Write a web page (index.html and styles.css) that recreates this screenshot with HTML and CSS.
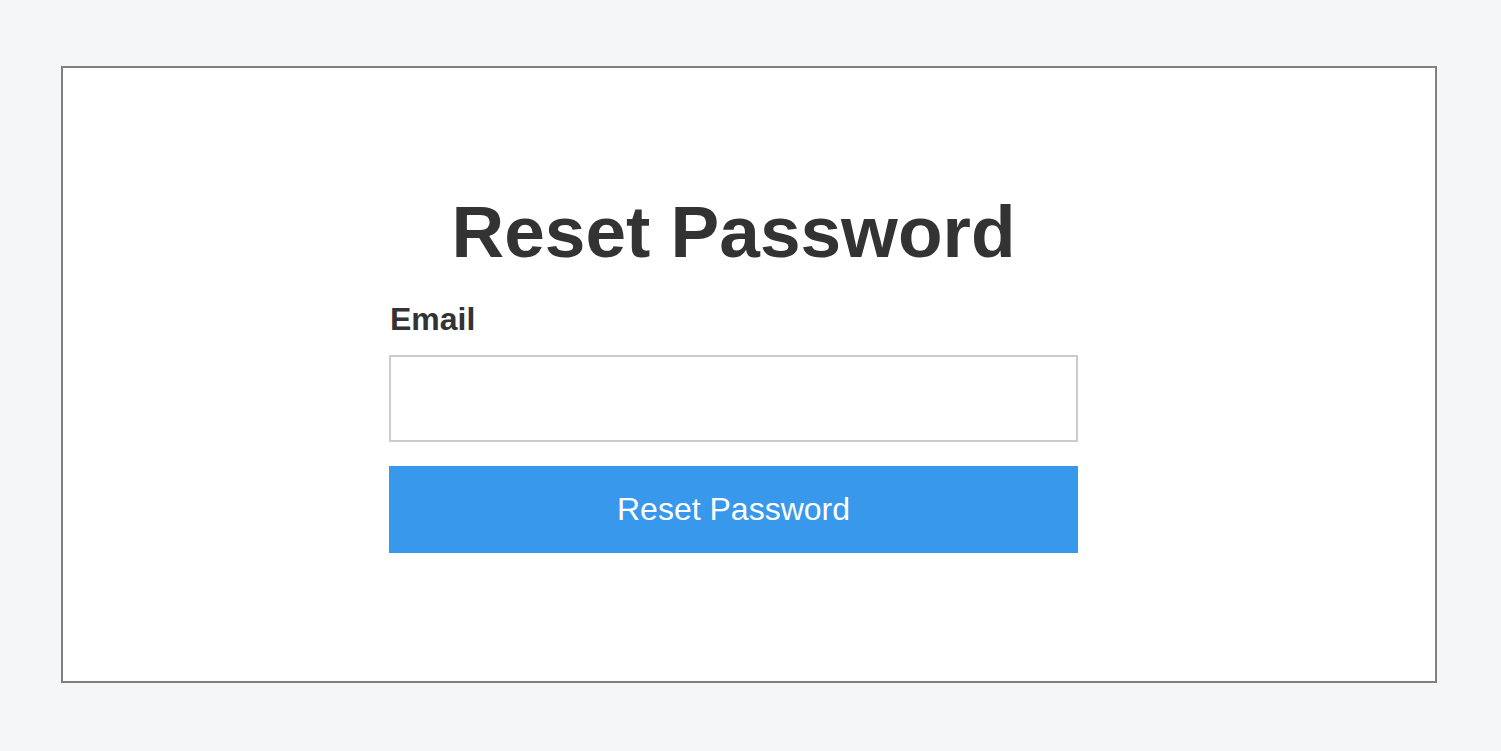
FILE: index.html
```html
<!DOCTYPE html>
<html lang="en">
<head>
  <meta charset="UTF-8" />
  <title>Reset Password</title>
  <link rel="stylesheet" href="styles.css">
</head>
<body>
  <div class="frame">
    <form class="reset-form">
      <h1>Reset Password</h1>
      <label for="email">Email</label>
      <input type="email" id="email" class="text-field" />
      <button type="submit">Reset Password</button>
    </form>
  </div>
</body>
</html>
```

FILE: styles.css
```css
body {
  margin: 0;
  background-color: #f5f6f8;
  font-family: 'Liberation Sans', Arial, sans-serif;
  color: #333;
}

.frame {
  box-sizing: border-box;
  width: 1376px;
  height: 617px;
  margin: 66px 0 0 61px;
  background-color: #fff;
  border: 2px solid #808080;
  padding: 124px 0 0 326px;
}

.reset-form {
  width: 689px;
  display: flex;
  flex-direction: column;
}

h1 {
  margin: 0 0 27px;
  text-align: center;
  font-size: 73px;
  line-height: 80px;
  font-weight: 700;
  color: #333;
}

label {
  font-size: 32px;
  line-height: 40px;
  font-weight: 700;
  margin-bottom: 16px;
  padding-left: 1px;
}

.text-field {
  box-sizing: border-box;
  height: 87px;
  border: 2px solid #ccc;
  padding: 0 20px;
  font-size: 28px;
  font-family: inherit;
  outline: none;
}

button {
  margin-top: 24px;
  height: 87px;
  border: none;
  background-color: #3898ec;
  color: #fff;
  font-family: inherit;
  font-size: 32px;
  cursor: pointer;
}
```
